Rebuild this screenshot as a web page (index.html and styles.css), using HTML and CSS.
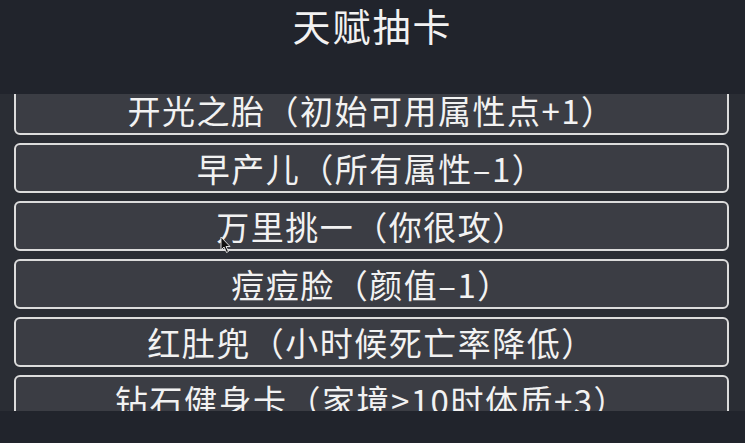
FILE: index.html
```html
<!DOCTYPE html>
<html lang="zh-CN">
<head>
    <meta charset="UTF-8">
    <meta name="viewport" content="width=device-width, initial-scale=1.0">
    <title>天赋抽卡</title>
    <link rel="stylesheet" href="styles.css">
</head>
<body>
    <header class="page-title">
        <h1>天赋抽卡</h1>
    </header>

    <section class="talent-list">
        <ul class="cards">
            <li class="card">开光之胎（初始可用属性点+1）</li>
            <li class="card">早产儿（所有属性–1）</li>
            <li class="card">万里挑一（你很攻）</li>
            <li class="card">痘痘脸（颜值–1）</li>
            <li class="card">红肚兜（小时候死亡率降低）</li>
            <li class="card">钻石健身卡（家境&gt;10时体质+3）</li>
        </ul>
    </section>

    <svg class="cursor" width="12" height="18" viewBox="0 0 12 18">
        <path d="M1 1 L1 14 L4 11 L6.5 16.5 L8.5 15.5 L6 10.5 L10 10.5 Z" fill="#111" stroke="#ddd" stroke-width="1"/>
    </svg>
</body>
</html>
```

FILE: styles.css
```css
body, html {
    margin: 0;
    padding: 0;
    font-family: "Noto Sans CJK SC", "Noto Sans", sans-serif;
    background-color: #21242c;
    color: #f2f2f2;
}

body {
    height: 443px;
    overflow: hidden;
    position: relative;
}

.page-title {
    height: 94px;
    text-align: center;
}

.page-title h1 {
    margin: 0;
    padding-top: 1px;
    font-size: 38px;
    font-weight: normal;
    line-height: 48px;
    letter-spacing: 2px;
}

.talent-list {
    height: 317px;
    overflow: hidden;
    background: #2a2d34;
    padding: 0 16px 0 14px;
}

.cards {
    list-style: none;
    margin: -9px 0 0 0;
    padding: 0;
    display: flex;
    flex-direction: column;
    gap: 8px;
}

.card {
    height: 46px;
    border: 2px solid #dcdcdc;
    border-radius: 6px;
    background: #3b3d44;
    font-size: 33px;
    line-height: 46px;
    letter-spacing: 1.5px;
    text-align: center;
    white-space: nowrap;
}

.cursor {
    position: absolute;
    left: 220px;
    top: 236px;
}
```
